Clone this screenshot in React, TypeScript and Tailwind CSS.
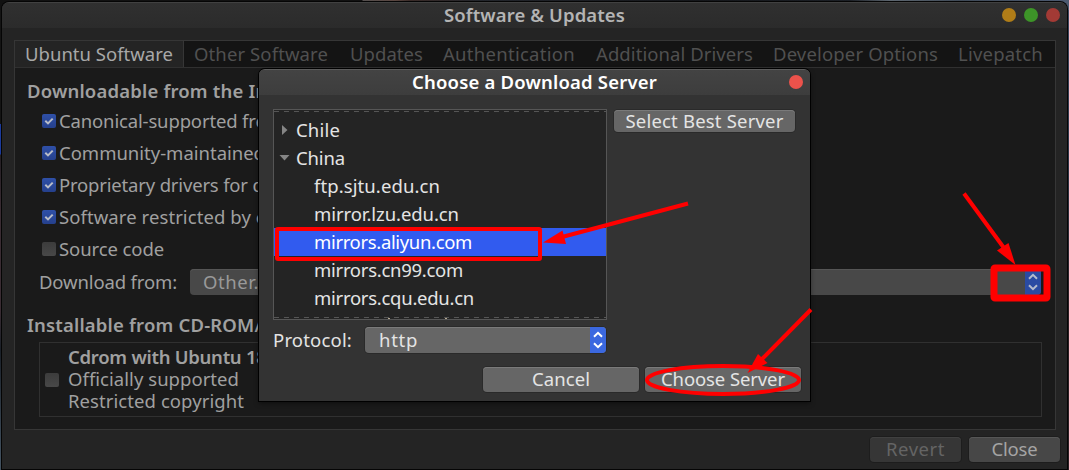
import { useLayoutEffect, useRef, type ReactNode } from "react";

function Label({ w, className = "", children }: { w: number; className?: string; children: ReactNode }) {
  const ref = useRef<HTMLSpanElement>(null);
  useLayoutEffect(() => {
    const el = ref.current;
    if (!el) return;
    el.style.letterSpacing = "0px";
    const n = (el.textContent ?? "").length;
    const natural = el.getBoundingClientRect().width;
    el.style.letterSpacing = `${(w - natural) / n}px`;
  }, [w]);
  return (
    <span ref={ref} className={`inline-block shrink-0 whitespace-pre ${className}`}>
      {children}
    </span>
  );
}

function Check({ on = false }: { on?: boolean }) {
  return (
    <span
      className={`flex h-[14px] w-[14px] shrink-0 items-center justify-center rounded-[2px] ${
        on ? "bg-linear-to-b from-[#2f50a8] to-[#25408c]" : "bg-linear-to-b from-[#3c3c3c] to-[#484848]"
      }`}
    >
      {on && (
        <svg width="14" height="14" viewBox="0 0 14 14" fill="none" stroke="#b9bdc8" strokeWidth="2">
          <path d="M3.3 6.8 L6 9.4 L10.7 4.6" />
        </svg>
      )}
    </span>
  );
}

function Spinner({ color }: { color: string }) {
  return (
    <svg width="16" height="24" viewBox="0 0 16 24" fill="none" stroke={color} strokeWidth="2">
      <path d="M4 8.8 L8 4.8 L12 8.8" />
      <path d="M4 15.2 L8 19.2 L12 15.2" />
    </svg>
  );
}

const tabs = [
  { t: "Other Software", w: 134, pl: "pl-[10px]" },
  { t: "Updates", w: 73, pl: "pl-[22px]" },
  { t: "Authentication", w: 132, pl: "pl-[20px]" },
  { t: "Additional Drivers", w: 157, pl: "pl-[21px]" },
  { t: "Developer Options", w: 165, pl: "pl-[20px]" },
  { t: "Livepatch", w: 85, pl: "pl-[20px]" },
];

const options = [
  { t: "Canonical-supported free", w: 217, on: true },
  { t: "Community-maintained", w: 206, on: true },
  { t: "Proprietary drivers for devices", w: 256, on: true },
  { t: "Software restricted by copyright", w: 280, on: true },
  { t: "Source code", w: 105, on: false },
];

const servers = [
  { t: "ftp.sjtu.edu.cn", w: 126 },
  { t: "mirror.lzu.edu.cn", w: 145 },
  { t: "mirrors.aliyun.com", w: 158, sel: true },
  { t: "mirrors.cn99.com", w: 149 },
  { t: "mirrors.cqu.edu.cn", w: 160 },
];

function MainWindow() {
  return (
    <div className="ml-[2px] mt-[2px] flex h-[467px] w-[1065px] flex-col rounded-t-[7px] border-t border-[#414141] bg-[#242424] text-[#a0a0a0] shadow-[0_0_0_1px_#050505]">
      <div className="flex h-[25px] shrink-0 items-center rounded-t-[6px] bg-linear-to-b from-[#303030] to-[#2b2b2b]">
        <Label w={181} className="ml-[442px] -mt-px font-semibold text-[#b4b4b4]">Software &amp; Updates</Label>
        <div className="-mt-px ml-auto mr-[7px] flex gap-[8px]">
          <span className="h-[14px] w-[14px] rounded-full bg-[#b07d18]" />
          <span className="h-[14px] w-[14px] rounded-full bg-[#3d9428]" />
          <span className="h-[14px] w-[14px] rounded-full bg-[#a33a35]" />
        </div>
      </div>
      <div className="ml-[12px] mt-[12px] flex h-[390px] w-[1042px] shrink-0 flex-col border border-[#363636] bg-[#1a1a1a]">
        <div className="flex h-[27px] shrink-0 items-center border-b border-[#303030] bg-[#141414]">
          <div className="flex h-[26px] w-[169px] shrink-0 items-center border-r border-[#363636] bg-[#242424] pl-[10px]">
            <Label w={148} className="text-[#a8a8a8]">Ubuntu Software</Label>
          </div>
          {tabs.map((tab) => (
            <div key={tab.t} className={`shrink-0 ${tab.pl} text-[#505050]`}>
              <Label w={tab.w}>{tab.t}</Label>
            </div>
          ))}
        </div>
        <div className="flex h-[34px] shrink-0 items-center pl-[12px] pt-[11px] font-semibold">
          <Label w={298}>Downloadable from the Internet</Label>
        </div>
        <div className="flex flex-col pt-[3px]">
          {options.map((o) => (
            <div key={o.t} className="flex h-[32px] items-center gap-[3px] pl-[27px]">
              <Check on={o.on} />
              <Label w={o.w}>{o.t}</Label>
            </div>
          ))}
        </div>
        <div className="flex h-[34px] shrink-0 items-center pl-[24px]">
          <Label w={138}>Download from:</Label>
          <div className="ml-[13px] flex h-[26px] w-[851px] shrink-0 items-center overflow-hidden rounded-[4px] bg-[#484848] pl-[13px] text-[#999] shadow-[inset_0_1px_#565656]">
            <Label w={67}>Other...</Label>
            <div className="ml-auto flex h-full w-[16px] items-center bg-[#2a4ba3]">
              <Spinner color="#b4bbcc" />
            </div>
          </div>
        </div>
        <div className="flex h-[42px] shrink-0 items-center pl-[12px] pt-[10px] font-semibold">
          <Label w={235}>Installable from CD-ROM/</Label>
        </div>
        <div className="ml-[24px] mt-px flex h-[75px] w-[1003px] shrink-0 items-center border border-[#303030] pl-[5px]">
          <Check />
          <div className="-mt-[2px] ml-[9px] flex flex-col items-start leading-[22px]">
            <Label w={224} className="font-semibold">Cdrom with Ubuntu 18.04</Label>
            <Label w={171}>Officially supported</Label>
            <Label w={176}>Restricted copyright</Label>
          </div>
        </div>
      </div>
      <div className="mr-[7px] mt-[7px] flex justify-end gap-[8px]">
        <div className="flex h-[25px] w-[91px] items-center justify-center rounded-[4px] bg-[#363636] pb-px text-[#646464] shadow-[0_0_0_1px_#1d1d1d,inset_0_1px_#404040]">
          <Label w={59}>Revert</Label>
        </div>
        <div className="flex h-[25px] w-[91px] items-center justify-center rounded-[4px] bg-[#474747] pb-px text-[#a4a4a4] shadow-[0_0_0_1px_#1d1d1d,inset_0_1px_#565656]">
          <Label w={46}>Close</Label>
        </div>
      </div>
    </div>
  );
}

function ServerDialog() {
  return (
    <div className="absolute left-[259px] top-[69px] flex h-[332px] w-[551px] flex-col rounded-t-[6px] border-t border-[#5c5c5c] bg-[#333] text-[#e4e4e4] shadow-[0_0_0_1px_#000,0_2px_5px_#0008]">
      <div className="flex h-[25px] shrink-0 items-center rounded-t-[5px] bg-linear-to-b from-[#434343] to-[#3d3d3d]">
        <Label w={245} className="-mt-px ml-[153px] font-semibold text-white">Choose a Download Server</Label>
        <span className="-mt-px ml-auto mr-[7px] h-[14px] w-[14px] rounded-full bg-[#ec524b]" />
      </div>
      <div className="flex items-start pl-[14px] pt-[14px]">
        <div className="flex h-[211px] w-[334px] shrink-0 flex-col overflow-hidden border border-[#565656] bg-[#242424]">
          <div className="mt-px h-px shrink-0 bg-[repeating-linear-gradient(90deg,#555_0_5px,#242424_5px_10px)]" />
          <div className="flex h-[205px] shrink-0 flex-col overflow-hidden pt-[4px]">
            <div className="flex h-[28px] shrink-0 items-center pl-[7px]">
              <svg width="8" height="12" viewBox="0 0 8 12"><path d="M1 1 L6.5 6 L1 11Z" fill="#858585" /></svg>
              <Label w={44} className="ml-[7px]">Chile</Label>
            </div>
            <div className="flex h-[28px] shrink-0 items-center pl-[5px]">
              <svg width="11" height="8" viewBox="0 0 11 8"><path d="M0.5 1 H10.5 L5.5 6.5Z" fill="#858585" /></svg>
              <Label w={49} className="ml-[6px]">China</Label>
            </div>
            {servers.map((s) => (
              <div key={s.t} className={`flex h-[28px] shrink-0 items-center pl-[40px] ${s.sel ? "bg-[#315bef] text-white" : ""}`}>
                <Label w={s.w}>{s.t}</Label>
              </div>
            ))}
          </div>
          <div className="h-px shrink-0 bg-[repeating-linear-gradient(90deg,#555_0_5px,#242424_5px_10px)]" />
          <div className="flex h-px shrink-0 gap-[55px] pl-[114px]">
            <span className="h-px w-[2px] bg-[#b5a890]" />
            <span className="h-px w-[2px] bg-[#b5a890]" />
          </div>
        </div>
        <div className="ml-[7px] mt-px flex h-[22px] w-[181px] items-center justify-center rounded-[4px] bg-[#666] shadow-[0_0_0_1px_#2a2a2a,inset_0_1px_#7a7a7a]">
          <Label w={158}>Select Best Server</Label>
        </div>
      </div>
      <div className="flex items-center pl-[14px] pt-[7px]">
        <Label w={79}>Protocol:</Label>
        <div className="ml-[13px] flex h-[26px] w-[241px] items-center overflow-hidden rounded-[4px] bg-[#666] pl-[14px] shadow-[0_0_0_1px_#2a2a2a,inset_0_1px_#7a7a7a]">
          <Label w={39}>http</Label>
          <div className="ml-auto flex h-full w-[16px] items-center bg-[#3b68e0]">
            <Spinner color="#fff" />
          </div>
        </div>
      </div>
      <div className="mr-[9px] mt-[14px] flex justify-end gap-[6px]">
        <div className="flex h-[25px] w-[156px] items-center justify-center rounded-[4px] bg-[#666] pb-px shadow-[0_0_0_1px_#2a2a2a,inset_0_1px_#7a7a7a]">
          <Label w={58}>Cancel</Label>
        </div>
        <div className="flex h-[25px] w-[156px] items-center justify-center rounded-[4px] bg-[#666] pb-px shadow-[0_0_0_1px_#2a2a2a,inset_0_1px_#7a7a7a]">
          <Label w={124}>Choose Server</Label>
        </div>
      </div>
    </div>
  );
}

function Annotations() {
  return (
    <svg className="absolute left-0 top-0" width="1069" height="470" viewBox="0 0 1069 470" fill="none" stroke="#f00">
      <rect x="277" y="229" width="263" height="30" rx="1" strokeWidth="4" />
      <path d="M688 203.5 L562 237" strokeWidth="4" />
      <path d="M543 242.5 L562.5 230.5 L566 244Z" fill="#f00" stroke="none" />
      <rect x="994" y="268" width="53" height="30" rx="1" strokeWidth="7" strokeLinejoin="round" />
      <path d="M964 193.5 L1004 248" strokeWidth="4" />
      <path d="M1015.5 265 L997 250.5 L1008.5 243Z" fill="#f00" stroke="none" />
      <ellipse cx="723" cy="380" rx="76" ry="14" strokeWidth="4" />
      <path d="M811 309.5 L762 359" strokeWidth="4" />
      <path d="M747.5 373 L758 354 L767.5 363Z" fill="#f00" stroke="none" />
    </svg>
  );
}

function Desktop() {
  return (
    <div className="absolute inset-0 flex flex-col">
      <div className="h-[10px] bg-[linear-gradient(90deg,#111_0_362px,#55504f_363px,#5a4640_395px,#3a2b28_410px,#23262c_480px,#15171b_700px,#1c2026_850px,#5d666f_890px,#3f4a57_960px,#4c5a70_1069px)]" />
      <div className="flex flex-1 justify-between">
        <div className="w-[2px] bg-[linear-gradient(180deg,#141414_0_114px,#1b3a9c_114px_144px,#241f24_145px,#3a2c33_200px,#3a2c33_300px,#1a2028_340px,#41505e_450px)]" />
        <div className="w-[2px] bg-[linear-gradient(180deg,#3c4860_0,#2c3648_150px,#2a2024_300px,#2a2024_460px)]" />
      </div>
    </div>
  );
}

export default function App() {
  return (
    <div className="relative h-[470px] w-[1069px] overflow-hidden bg-[#0c0c0e] font-['Noto_Sans',sans-serif] text-[18.5px] leading-[24px]">
      <Desktop />
      <div className="relative flow-root">
        <MainWindow />
      </div>
      <ServerDialog />
      <Annotations />
    </div>
  );
}
